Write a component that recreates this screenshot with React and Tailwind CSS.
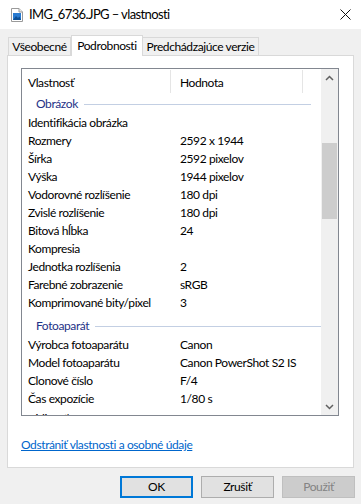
const font = { fontFamily: '"Segoe UI", Lato, "Liberation Sans", sans-serif' };

const imageRows = [
    ['Identifikácia obrázka', ''],
    ['Rozmery', '2592 x 1944'],
    ['Šírka', '2592 pixelov'],
    ['Výška', '1944 pixelov'],
    ['Vodorovné rozlíšenie', '180 dpi'],
    ['Zvislé rozlíšenie', '180 dpi'],
    ['Bitová hĺbka', '24'],
    ['Kompresia', ''],
    ['Jednotka rozlíšenia', '2'],
    ['Farebné zobrazenie', 'sRGB'],
    ['Komprimované bity/pixel', '3'],
];

const cameraRows = [
    ['Výrobca fotoaparátu', 'Canon'],
    ['Model fotoaparátu', 'Canon PowerShot S2 IS'],
    ['Clonové číslo', 'F/4'],
    ['Čas expozície', '1/80 s'],
];

function FileIcon() {
    return (
        <svg width="12" height="14" viewBox="0 0 12 14">
            <path d="M0.5 0.5 H8 L11.5 4 V13.5 H0.5 Z" fill="#fff" stroke="#9a9a9a" />
            <path d="M8 0.5 V4 H11.5" fill="#e8e8e8" stroke="#9a9a9a" />
            <rect x="2" y="5" width="8" height="7" fill="#2a7bd0" />
            <path d="M2 12 L5 8 L7 10 L8.5 8.5 L10 12 Z" fill="#0d4f94" />
        </svg>
    );
}

function Row({ name, value, className }) {
    return (
        <div className={`flex h-[18px] items-center text-[12px] tracking-[-0.4px] text-black ${className || ''}`}>
            <div className="w-[149px] pl-[6px] whitespace-nowrap">{name}</div>
            <div className="pl-[9px] whitespace-nowrap">{value}</div>
        </div>
    );
}

function Group({ label, className }) {
    return (
        <div className={`flex h-[20px] items-center pl-[14px] ${className || ''}`}>
            <span className="text-[12px] tracking-[-0.4px] text-[#1e3287] pr-[6px]">{label}</span>
            <div className="w-[227px] h-px bg-[#c3cfe3]" />
        </div>
    );
}

export default function App() {
    return (
        <div className="w-[361px] h-[504px] bg-[#f0f0f0] flex flex-col overflow-hidden" style={font}>
            <div className="h-[29px] bg-white flex items-center pl-[11px] pr-[10px]">
                <FileIcon />
                <span className="ml-[6px] text-[13px] tracking-[-0.6px] text-black">IMG_6736.JPG – vlastnosti</span>
                <svg className="ml-auto" width="11" height="11" viewBox="0 0 11 11">
                    <path d="M0.5 0.5 L10.5 10.5 M10.5 0.5 L0.5 10.5" stroke="#111" strokeWidth="1" />
                </svg>
            </div>

            <div className="flex items-end h-[20px] mt-[6px] pl-[8px] text-[12px] tracking-[-0.4px] text-black whitespace-nowrap">
                <div className="h-[18px] w-[63px] flex items-center justify-center border border-b-0 border-[#d9d9d9] bg-[#f0f0f0]">
                    Všeobecné
                </div>
                <div className="h-[21px] w-[72px] -mb-px relative z-10 flex items-center justify-center border border-b-0 border-[#d9d9d9] bg-white">
                    Podrobnosti
                </div>
                <div className="h-[18px] w-[116px] flex items-center justify-center border border-b-0 border-l-0 border-[#d9d9d9] bg-[#f0f0f0]">
                    Predchádzajúce verzie
                </div>
            </div>

            <div className="mx-[7px] w-[347px] h-[413px] border border-[#d9d9d9] bg-white pl-[13px] pt-[12px]">
                <div className="w-[318px] h-[348px] border border-[#828790] flex overflow-hidden">
                    <div className="flex-1 overflow-hidden">
                        <div className="flex h-[25px] text-[12px] tracking-[-0.4px] text-black">
                            <div className="w-[149px] pl-[6px] flex items-center pt-[3px] border-r border-[#e5e5e5] my-[1px]">Vlastnosť</div>
                            <div className="w-[132px] pl-[9px] flex items-center pt-[3px] border-r border-[#e5e5e5] my-[1px]">Hodnota</div>
                        </div>
                        <Group label="Obrázok" />
                        {imageRows.map(([n, v]) => <Row key={n} name={n} value={v} />)}
                        <Group label="Fotoaparát" className="mt-[4px]" />
                        {cameraRows.map(([n, v]) => <Row key={n} name={n} value={v} />)}
                        <Row name="Citlivosť ISO" value="ISO-100" className="mt-[2px]" />
                    </div>
                    <div className="w-[17px] bg-[#f0f0f0] flex flex-col">
                        <div className="h-[17px] flex items-center justify-center">
                            <svg width="9" height="6" viewBox="0 0 9 6">
                                <path d="M1 5 L4.5 1.5 L8 5" fill="none" stroke="#606060" strokeWidth="1.5" />
                            </svg>
                        </div>
                        <div className="mt-[57px] h-[76px] mx-[1px] bg-[#cdcdcd]" />
                        <div className="flex-1" />
                        <div className="h-[17px] flex items-center justify-center">
                            <svg width="9" height="6" viewBox="0 0 9 6">
                                <path d="M1 1 L4.5 4.5 L8 1" fill="none" stroke="#606060" strokeWidth="1.5" />
                            </svg>
                        </div>
                    </div>
                </div>
                <div className="mt-[22px] leading-[14px] text-[12px] tracking-[-0.4px]">
                    <span className="text-[#0066cc] underline">Odstrániť vlastnosti a osobné údaje</span>
                </div>
            </div>

            <div className="flex justify-end gap-[8px] pr-[6px] mt-[8px] text-[12px] tracking-[-0.4px]">
                <button className="w-[73px] h-[22px] bg-[#e1e1e1] border-2 border-[#0078d7] text-black">OK</button>
                <button className="w-[73px] h-[22px] bg-[#e1e1e1] border border-[#adadad] text-black">Zrušiť</button>
                <button className="w-[73px] h-[22px] bg-[#cccccc] border border-[#bfbfbf] text-[#838383]">Použiť</button>
            </div>
        </div>
    );
}
